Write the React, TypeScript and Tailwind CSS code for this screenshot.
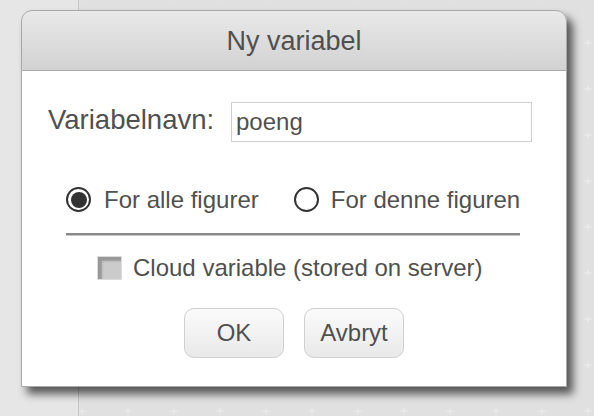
import React from "react";

const font = { fontFamily: '"Liberation Sans", Arial, Helvetica, sans-serif' };

function Radio({ checked }: { checked: boolean }) {
  return (
    <div className="w-[25px] h-[25px] rounded-full border-[2px] border-[#333] flex items-center justify-center bg-white shrink-0">
      {checked && <div className="w-[16px] h-[16px] rounded-full bg-[#333]" />}
    </div>
  );
}

export default function App() {
  return (
    <div className="relative w-[594px] h-[416px] overflow-hidden flex bg-[#dfe0df]" style={font}>
      <div className="w-[79px] h-full bg-[#e5e6e5] border-r border-[#c6c7c6] shrink-0" />
      <div className="relative flex-1 h-full">
        <svg className="absolute inset-0 w-full h-full" aria-hidden>
          <defs>
            <pattern id="plus" patternUnits="userSpaceOnUse" width="46" height="46" x="-20" y="20">
              <path d="M23 19.5v7M19.5 23h7" stroke="#e9eae9" strokeWidth="1.5" />
            </pattern>
          </defs>
          <rect width="100%" height="100%" fill="url(#plus)" />
        </svg>
      </div>

      <div className="absolute left-[21px] top-[10px] w-[546px] flex flex-col rounded-t-[11px] shadow-[6px_7px_8px_rgba(0,0,0,0.62)]">
        <div className="h-[61px] rounded-t-[11px] border border-[#a9a9a9] bg-gradient-to-b from-[#e9e9e9] to-[#d2d2d2] flex items-center justify-center text-[27px] text-[#505050] pt-[1px]">
          Ny variabel
        </div>
        <div className="h-[316px] bg-white border-x border-b border-[#a9a9a9] flex flex-col">
          <div className="mt-[31px] h-[40px] pl-[26px] flex items-center">
            <div className="w-[183px] shrink-0 text-[27.5px] text-[#505050] leading-none pb-[4px]">Variabelnavn:</div>
            <div className="w-[301px] h-[40px] border border-[#cfcfcf] flex items-center pl-[4px] text-[24px] text-[#505050]">
              poeng
            </div>
          </div>

          <div className="mt-[45px] h-[25px] pl-[44px] flex items-center text-[24px] text-[#505050]">
            <Radio checked />
            <span className="ml-[13px] leading-none">For alle figurer</span>
            <div className="ml-[35px]">
              <Radio checked={false} />
            </div>
            <span className="ml-[12px] leading-none">For denne figuren</span>
          </div>

          <div className="mt-[21px] ml-[44px] w-[454px] h-[2px] bg-[#8a8a8a]" />
          <div className="ml-[44px] w-[454px] h-[1px] bg-[#c4c4c4]" />

          <div className="mt-[20px] h-[24px] pl-[75px] flex items-center text-[24px] text-[#505050]">
            <div className="w-[25px] h-[24px] border border-[#dcdcdc] bg-[#cbcbcb] shadow-[inset_4px_4px_2px_rgba(0,0,0,0.25)] shrink-0" />
            <span className="ml-[11px] leading-none">Cloud variable (stored on server)</span>
          </div>

          <div className="mt-[28px] flex justify-center gap-[20px]">
            <div className="w-[100px] h-[50px] rounded-[10px] border border-[#d0d0d0] bg-gradient-to-b from-[#fbfbfb] to-[#e9e9e9] flex items-center justify-center text-[24px] text-[#505050]">
              OK
            </div>
            <div className="w-[100px] h-[50px] rounded-[10px] border border-[#d0d0d0] bg-gradient-to-b from-[#fbfbfb] to-[#e9e9e9] flex items-center justify-center text-[24px] text-[#505050]">
              Avbryt
            </div>
          </div>
        </div>
      </div>
    </div>
  );
}
